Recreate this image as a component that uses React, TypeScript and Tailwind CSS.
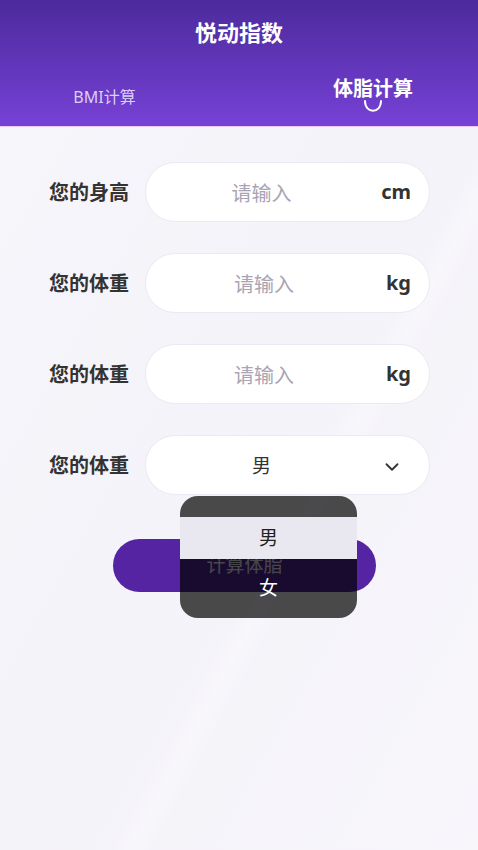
import { ChevronDown } from "lucide-react";

const font = { fontFamily: '"Noto Sans", "Noto Sans CJK SC", sans-serif' };

function InputRow({ label, unit }: { label: string; unit: string }) {
  return (
    <div className="flex items-center gap-[16px]">
      <span className="w-[80px] shrink-0 pt-[2px] text-[20px] font-bold text-[#333333]">{label}</span>
      <div className="flex h-[60px] flex-1 items-center gap-4 rounded-full border border-[#ebe9f1] bg-white pl-[12px] pr-[18px]">
        <span className="flex-1 pt-[4px] text-center text-[20px] text-[#a8a4b4]">请输入</span>
        <span className="text-[20px] font-bold text-[#333333]">{unit}</span>
      </div>
    </div>
  );
}

export default function App() {
  return (
    <div
      style={font}
      className="relative flex h-[850px] w-[478px] flex-col overflow-hidden bg-gradient-to-br from-[#f7f6fb] via-[#f4f3f9] to-[#f8f6fb]"
    >
      {/* 头部 */}
      <header className="flex h-[127px] flex-col border-b border-[#e9c9f2] bg-gradient-to-b from-[#4c2a9c] to-[#7741d6] text-white">
        <h1 className="pt-[17px] text-center text-[22px] font-bold leading-[30px]">悦动指数</h1>
        <div className="mt-[28px] flex items-start">
          <div className="flex w-[209px] justify-center pt-[10px] text-[16px] text-[#dccff3]">BMI计算</div>
          <div className="ml-[124px] flex flex-col items-center">
            <span className="text-[20px] font-bold leading-[28px]">体脂计算</span>
            <svg width="22" height="14" viewBox="0 0 22 14" className="-mt-[4px]">
              <path d="M3 2 C3 15 19 15 19 2" fill="none" stroke="white" strokeWidth="2" strokeLinecap="round" />
            </svg>
          </div>
        </div>
      </header>

      {/* 背景光带 */}
      <div className="pointer-events-none absolute left-[300px] top-[140px] h-[760px] w-[14px] rotate-[28deg] bg-white/40 blur-[8px]" />

      <main className="relative flex flex-col gap-[31px] pl-[49px] pr-[48px] pt-[35px]">
        <InputRow label="您的身高" unit="cm" />
        <InputRow label="您的体重" unit="kg" />
        <InputRow label="您的体重" unit="kg" />
        <div className="relative flex items-center gap-[16px]">
          <span className="w-[80px] shrink-0 pt-[2px] text-[20px] font-bold text-[#333333]">您的体重</span>
          <div className="flex h-[60px] flex-1 items-center gap-4 rounded-full border border-[#ebe9f1] bg-white pl-[12px] pr-[26px]">
            <span className="flex-1 pt-[3px] text-center text-[19px] text-[#333333]">男</span>
            <ChevronDown className="mt-[3px] size-[22px] text-[#333333]" strokeWidth={2} />
          </div>
        </div>
      </main>

      <button className="relative ml-[113px] mt-[44px] flex h-[53px] w-[263px] items-center justify-center rounded-full bg-[#5424a2] text-[19px] text-white/90">
        计算体脂
      </button>

      {/* 下拉选项 */}
      <div className="absolute left-[180px] top-[496px] flex h-[122px] w-[177px] flex-col overflow-hidden rounded-[18px] bg-black/70 pt-[21px]">
        <div className="flex h-[42px] items-center justify-center bg-[#e9e7ef] text-[19px] text-[#222222]">男</div>
        <div className="flex h-[56px] items-center justify-center pt-[2px] text-[19px] text-white">女</div>
      </div>
    </div>
  );
}
